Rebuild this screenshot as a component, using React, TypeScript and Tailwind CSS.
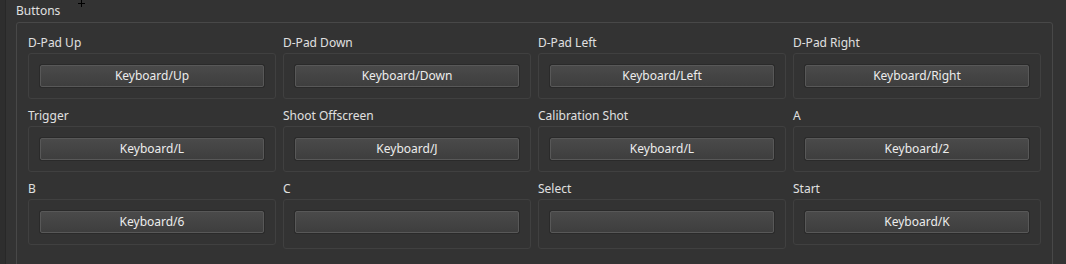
const bindings = [
  { label: 'D-Pad Up', value: 'Keyboard/Up' },
  { label: 'D-Pad Down', value: 'Keyboard/Down' },
  { label: 'D-Pad Left', value: 'Keyboard/Left' },
  { label: 'D-Pad Right', value: 'Keyboard/Right' },
  { label: 'Trigger', value: 'Keyboard/L' },
  { label: 'Shoot Offscreen', value: 'Keyboard/J' },
  { label: 'Calibration Shot', value: 'Keyboard/L' },
  { label: 'A', value: 'Keyboard/2' },
  { label: 'B', value: 'Keyboard/6' },
  { label: 'C', value: '' },
  { label: 'Select', value: '' },
  { label: 'Start', value: 'Keyboard/K' },
];

const BindingCell = ({ label, value }: { label: string; value: string }) => (
  <div className="flex flex-col">
    <span className="h-[16px] leading-[16px] text-[#e0e0e0]">{label}</span>
    <div className="mt-[2px] rounded-[3px] border border-[#404040] p-[11px]">
      <button className="h-[22px] w-full rounded-[2px] border border-[#585858] bg-gradient-to-b from-[#4a4a4a] to-[#3e3e3e] leading-[20px] text-[#ececec] shadow-[0_0_0_1px_#2a2a2a]">
        {value}
      </button>
    </div>
  </div>
);

const App = () => {
  return (
    <div
      className="relative flex h-[264px] w-[1066px] overflow-hidden bg-[#333333] text-[12px]"
      style={{ fontFamily: '"Noto Sans", "Open Sans", sans-serif' }}
    >
      <div className="w-[5px] bg-[#2e2e2e]" />
      <div className="w-px bg-[#282828]" />
      <div className="flex flex-col pl-[10px]">
        <span className="mt-[3px] h-[16px] shrink-0 leading-[16px] text-[#e0e0e0]">Buttons</span>
        <div className="mt-[3px] h-[300px] w-[1037px] shrink-0 rounded-[3px] border border-[#484848] pt-[12px] pl-[11px]">
          <div className="grid w-[1013px] grid-cols-4 gap-x-[7px] gap-y-[9px]">
            {bindings.map((b) => (
              <BindingCell key={b.label} label={b.label} value={b.value} />
            ))}
          </div>
        </div>
      </div>
      <svg className="absolute left-[78px] top-[0px]" width="7" height="7" viewBox="0 0 7 7">
        <path d="M3 0h1v3h3v1H4v3H3V4H0V3h3z" fill="#000" />
      </svg>
    </div>
  );
};

export default App;
